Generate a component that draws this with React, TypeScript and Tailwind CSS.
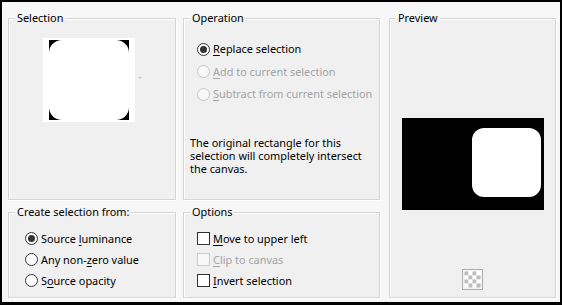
import React from "react";

function Group({
  title,
  className,
  children,
}: {
  title: string;
  className?: string;
  children?: React.ReactNode;
}) {
  return (
    <div
      className={`relative box-border border border-[#d5d5d5] bg-[#f0f0f0] shadow-[inset_1px_1px_0_#ffffff,1px_1px_0_#ffffff] ${className ?? ""}`}
    >
      <span className="absolute left-[6px] top-[-9px] px-[2px] leading-[16px] whitespace-nowrap bg-[linear-gradient(to_bottom,#f7f7f7_8px,#f0f0f0_8px)]">
        {title}
      </span>
      {children}
    </div>
  );
}

function Radio({ checked, disabled }: { checked?: boolean; disabled?: boolean }) {
  return (
    <span
      className={`flex h-[13px] w-[13px] shrink-0 items-center justify-center rounded-full border ${
        disabled ? "border-[#c6c6c6] bg-[#f8f8f8]" : "border-[#333333] bg-white"
      }`}
    >
      {checked && <span className="h-[7px] w-[7px] rounded-full bg-[#333333]" />}
    </span>
  );
}

function Check({ disabled }: { disabled?: boolean }) {
  return (
    <span
      className={`block h-[13px] w-[13px] shrink-0 border ${
        disabled ? "border-[#cccccc] bg-[#f8f8f8]" : "border-[#333333] bg-white"
      }`}
    />
  );
}

const U = ({ children }: { children: React.ReactNode }) => (
  <u className="underline decoration-1 underline-offset-[2px]">{children}</u>
);

export default function App() {
  return (
    <div className="box-border flex h-[305px] w-[562px] border-x-2 border-t-2 border-b-[3px] border-black bg-[#f7f7f7] pl-[6px] pt-[16px] font-['Noto_Sans',sans-serif] text-[10.9px] leading-[16px] text-black">
      {/* Column 1 */}
      <div className="flex w-[168px] flex-col gap-[12px]">
        <Group title="Selection" className="flex h-[182px] items-start pl-[34px] pt-[19px]">
          <div className="flex items-center">
            <div className="flex h-[84px] w-[92px] justify-center bg-white pt-[2px]">
              <svg width="80" height="80" viewBox="0 0 80 80">
                <rect x="0" y="0" width="80" height="80" fill="#000" />
                <rect x="0" y="0" width="80" height="80" rx="13" fill="#fff" />
              </svg>
            </div>
            <svg width="4" height="3" viewBox="0 0 4 3" className="mb-[4px] ml-[3px]">
              <path d="M0 0 L4 0 L2 2 Z" fill="#c4c4c4" />
            </svg>
          </div>
        </Group>
        <Group title="Create selection from:" className="h-[86px] pl-[16px] pt-[15px]">
          <div className="flex flex-col">
            <label className="flex h-[21px] items-center gap-[3px]">
              <Radio checked />
              <span>
                Source <U>l</U>uminance
              </span>
            </label>
            <label className="flex h-[21px] items-center gap-[3px]">
              <Radio />
              <span>
                Any non-<U>z</U>ero value
              </span>
            </label>
            <label className="flex h-[21px] items-center gap-[3px]">
              <Radio />
              <span>
                S<U>o</U>urce opacity
              </span>
            </label>
          </div>
        </Group>
      </div>

      {/* Column 2 */}
      <div className="ml-[7px] flex w-[197px] flex-col gap-[12px]">
        <Group title="Operation" className="h-[182px] pt-[19px]">
          <div className="flex flex-col pl-[13px]">
            <label className="flex h-[22.5px] items-center gap-[3px]">
              <Radio checked />
              <span>
                <U>R</U>eplace selection
              </span>
            </label>
            <label className="flex h-[22.5px] items-center gap-[3px] text-[#a3a3a3]">
              <Radio disabled />
              <span>
                <U>A</U>dd to current selection
              </span>
            </label>
            <label className="flex h-[22.5px] items-center gap-[3px] text-[#a3a3a3]">
              <Radio disabled />
              <span>
                <U>S</U>ubtract from current selection
              </span>
            </label>
          </div>
          <p className="mt-[30px] pl-[6px] leading-[13px]">
            The original rectangle for this
            <br />
            selection will completely intersect
            <br />
            the canvas.
          </p>
        </Group>
        <Group title="Options" className="h-[86px] pl-[13px] pt-[15px]">
          <div className="flex flex-col">
            <label className="flex h-[21px] items-center gap-[3px]">
              <Check />
              <span>
                <U>M</U>ove to upper left
              </span>
            </label>
            <label className="flex h-[21px] items-center gap-[3px] text-[#a3a3a3]">
              <Check disabled />
              <span>
                <U>C</U>lip to canvas
              </span>
            </label>
            <label className="flex h-[21px] items-center gap-[3px]">
              <Check />
              <span>
                <U>I</U>nvert selection
              </span>
            </label>
          </div>
        </Group>
      </div>

      {/* Column 3 */}
      <div className="ml-[9px] w-[167px]">
        <Group title="Preview" className="flex h-[280px] flex-col items-center pb-[7px] pt-[99px]">
          <svg width="142" height="92" viewBox="0 0 142 92">
            <rect x="0" y="0" width="142" height="92" fill="#000" />
            <rect x="70" y="10" width="69" height="69" rx="12" fill="#fff" />
          </svg>
          <div className="flex-1" />
          <svg width="21" height="21" viewBox="0 0 21 21">
            <rect x="0.5" y="0.5" width="20" height="20" fill="#f4f4f4" stroke="#adadad" />
            {[0, 1, 2, 3].map((r) =>
              [0, 1, 2, 3].map((c) => (
                <rect
                  key={`${r}-${c}`}
                  x={2.5 + c * 4}
                  y={2.5 + r * 4}
                  width="4"
                  height="4"
                  fill={(r + c) % 2 === 0 ? "#bdbdbd" : "#ffffff"}
                />
              ))
            )}
          </svg>
        </Group>
      </div>
    </div>
  );
}
